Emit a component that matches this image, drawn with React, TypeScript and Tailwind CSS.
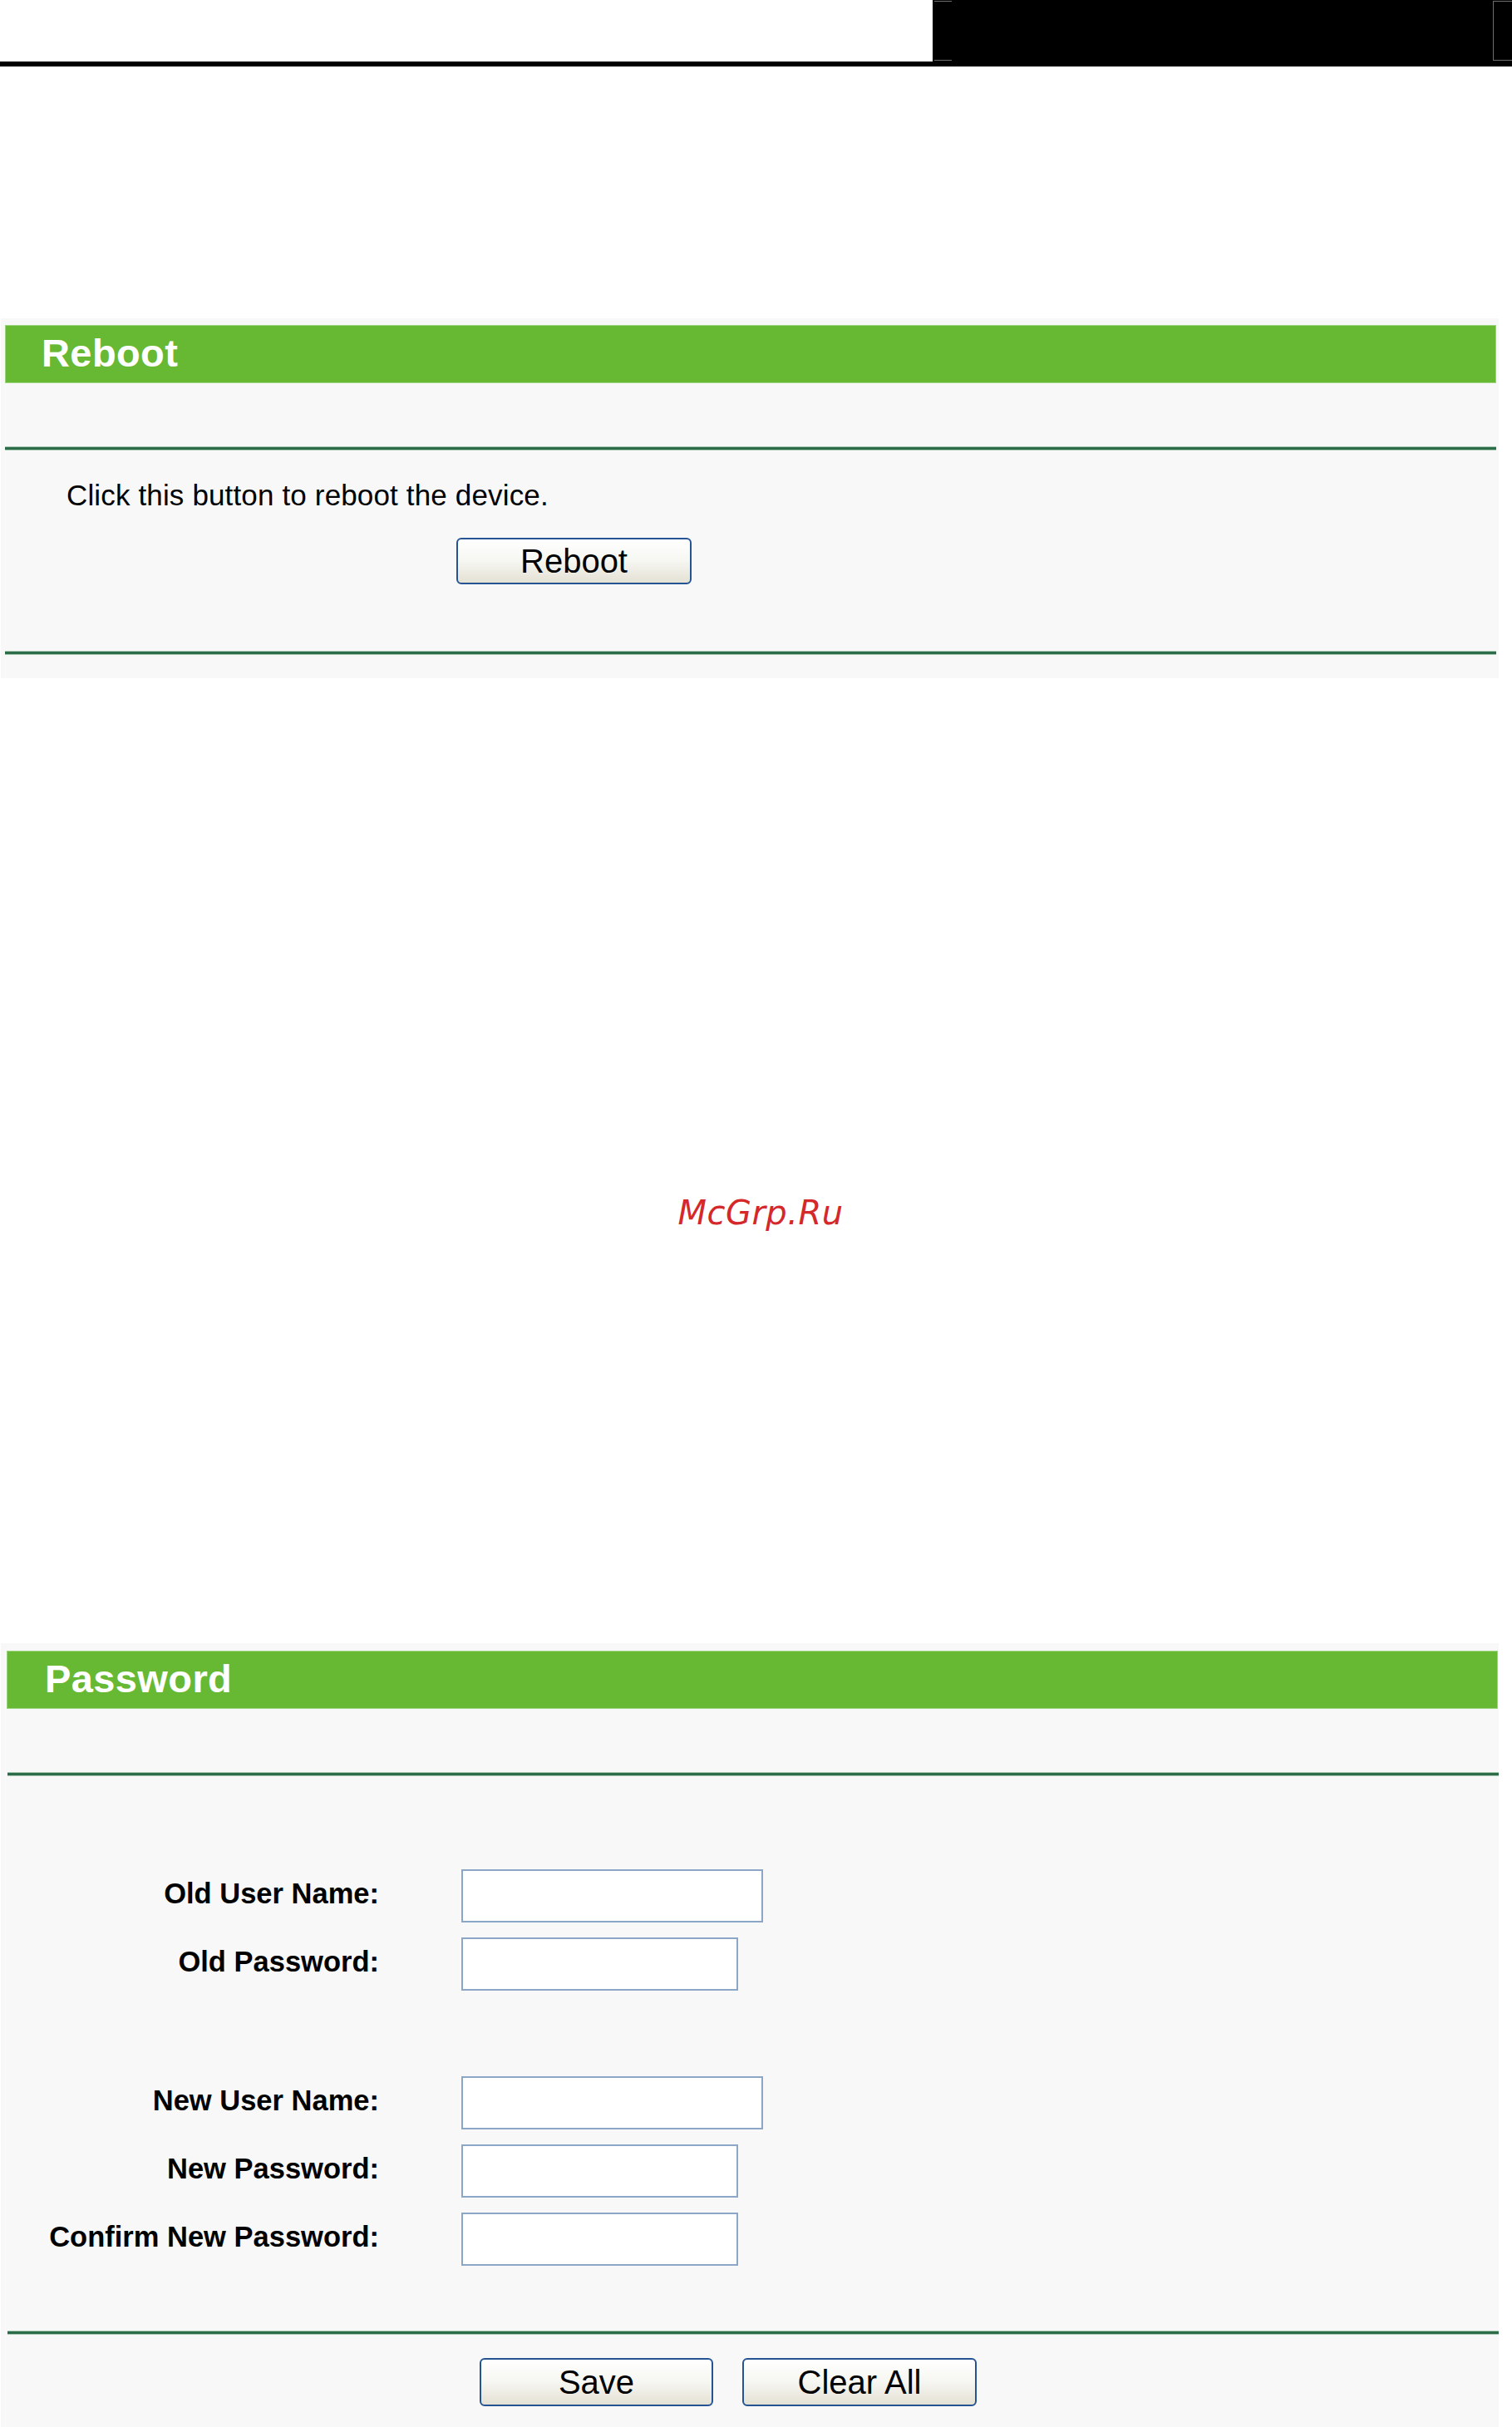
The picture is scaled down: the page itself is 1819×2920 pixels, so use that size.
import React from "react";

const sans = { fontFamily: '"Liberation Sans", Arial, sans-serif' };

function Rule({ className = "" }: { className?: string }) {
  return (
    <div
      className={`h-[5px] border-y border-[#a7c8b3] bg-[#2c6c48] ${className}`}
    />
  );
}

function Header({ title, className = "" }: { title: string; className?: string }) {
  return (
    <div
      className={`flex h-[70px] w-[1794px] items-center border border-[#9bd47c] bg-[#67b934] text-[47px] font-bold leading-none tracking-[0.4px] text-white ${className}`}
    >
      <span className="-mt-[4px]">{title}</span>
    </div>
  );
}

function XpButton({ label, className = "" }: { label: string; className?: string }) {
  return (
    <button
      type="button"
      className={`flex items-center justify-center rounded-[6px] border-2 border-[#245491] bg-gradient-to-b from-white via-[#f6f6f2] to-[#e4e1d4] text-[40px] leading-none text-black ${className}`}
    >
      {label}
    </button>
  );
}

function Field({ label, wide }: { label: string; wide: boolean }) {
  return (
    <>
      <div className="pt-[9px] text-right text-[34.5px] font-bold leading-[40px] text-black">
        {label}
      </div>
      <input
        type="text"
        className={`h-[64px] border-2 border-[#8ba6c6] bg-white outline-none ${
          wide ? "w-[363px]" : "w-[333px]"
        }`}
      />
    </>
  );
}

export default function App() {
  return (
    <div className="min-h-[2920px] w-[1819px] bg-white" style={sans}>
      {/* page banner */}
      <div className="flex h-[74px]">
        <div className="flex-1 bg-white" />
        <div className="relative w-[697px] bg-black">
          <span className="absolute left-[2px] top-[1px] h-px w-[21px] bg-[#6e6e6e]" />
          <span className="absolute bottom-[1px] left-[2px] h-px w-[21px] bg-[#6e6e6e]" />
          <span className="absolute right-0 top-[1px] h-px w-[23px] bg-[#6e6e6e]" />
          <span className="absolute bottom-[1px] right-0 h-px w-[23px] bg-[#6e6e6e]" />
          <span className="absolute right-[22px] top-[1px] bottom-[1px] w-px bg-[#6e6e6e]" />
        </div>
      </div>
      <div className="h-[6px] bg-black" />

      {/* Reboot panel */}
      <section className="ml-px mt-[303px] w-[1802px] bg-[#f8f8f8] pb-[28px] pt-[8px]">
        <Header title="Reboot" className="ml-[5px] pl-[43px]" />
        <Rule className="ml-[5px] mt-[76px] w-[1794px]" />
        <p className="mt-[34px] pl-[79px] text-[35px] leading-[40px] tracking-[0.15px] text-black">
          Click this button to reboot the device.
        </p>
        <XpButton label="Reboot" className="ml-[548px] mt-[31px] h-[56px] w-[283px]" />
        <Rule className="ml-[5px] mt-[80px] w-[1794px]" />
      </section>

      {/* site mark */}
      <div className="mt-[619px] flex h-[48px] justify-center pl-[11px]">
        <span
          className="text-[40px] italic leading-[48px] tracking-[0.5px] text-[#d4282b]"
          style={{ fontFamily: '"DejaVu Sans", Verdana, sans-serif' }}
        >
          McGrp.Ru
        </span>
      </div>

      {/* Password panel */}
      <section className="ml-px mt-[494px] w-[1802px] bg-[#f8f8f8] pb-[25px] pt-[9px]">
        <Header title="Password" className="ml-[7px] pl-[45px]" />
        <Rule className="ml-[8px] mt-[76px] w-[1794px]" />

        <div className="mt-[112px] grid grid-cols-[455px_auto] justify-start gap-x-[99px] gap-y-[18px]">
          <Field label="Old User Name:" wide />
          <Field label="Old Password:" wide={false} />
          <div className="col-span-2 h-[67px]" />
          <Field label="New User Name:" wide />
          <Field label="New Password:" wide={false} />
          <Field label="Confirm New Password:" wide={false} />
        </div>

        <Rule className="ml-[8px] mt-[78px] w-[1794px]" />
        <div className="ml-[576px] mt-[28px] flex gap-[35px]">
          <XpButton label="Save" className="h-[58px] w-[281px]" />
          <XpButton label="Clear All" className="h-[58px] w-[282px]" />
        </div>
      </section>
    </div>
  );
}
